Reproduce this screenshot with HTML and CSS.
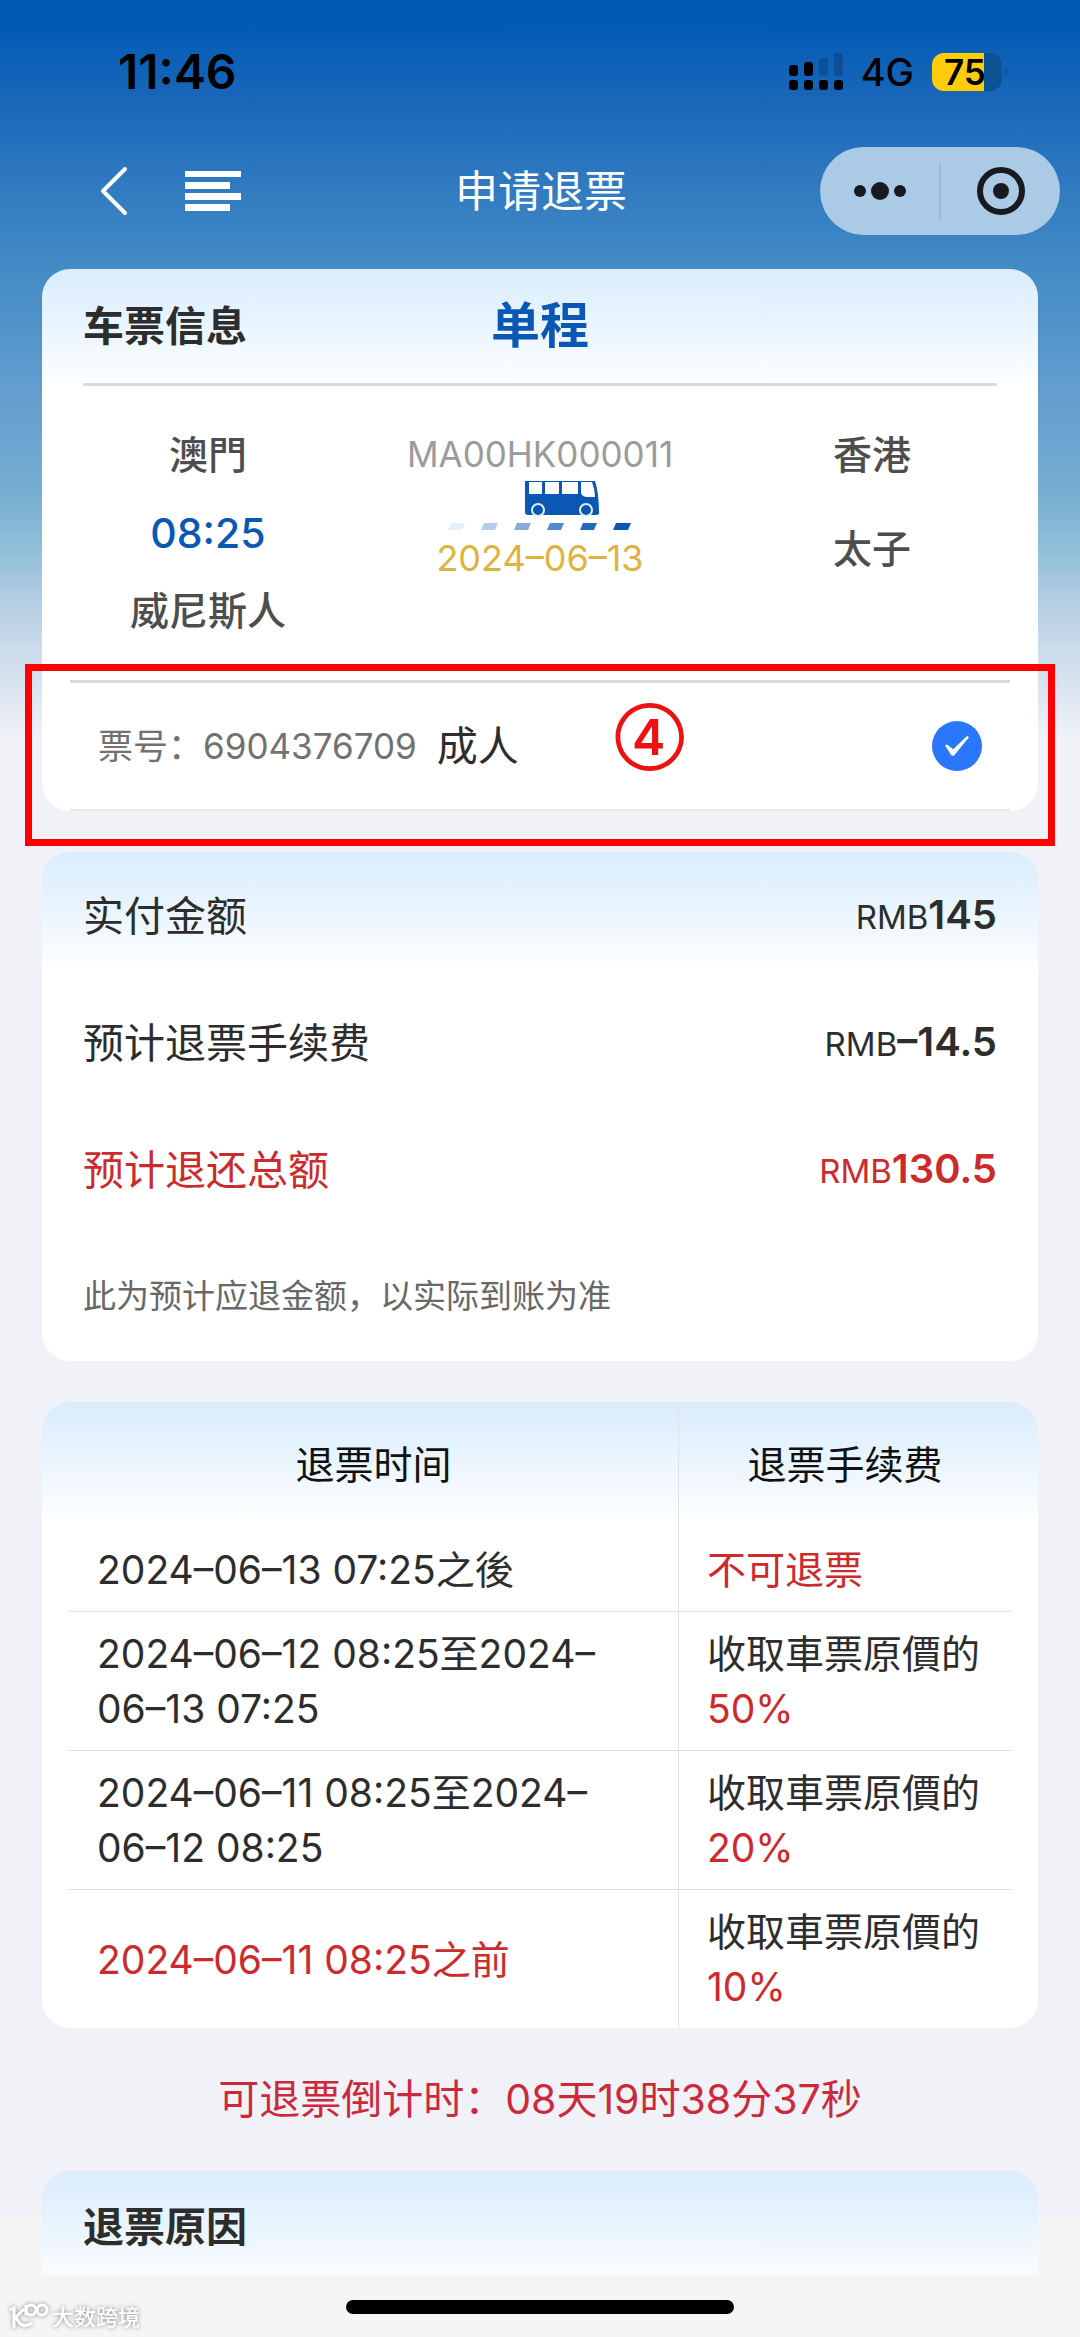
FILE: index.html
```html
<!DOCTYPE html>
<html lang="zh-CN">
<head>
<meta charset="utf-8">
<meta name="viewport" content="width=device-width, initial-scale=1">
<title>申请退票</title>
<link rel="stylesheet" href="styles.css">
</head>
<body>
<div class="page">
  <div class="status">
    <span class="status-time">11:46</span>
    <span class="status-right">
      <svg class="signal" width="54" height="38" viewBox="0 0 54 38" aria-hidden="true">
        <g class="signal-off"><rect x="30" y="5" width="9" height="18" rx="3"/><rect x="45" y="0" width="9" height="23" rx="3"/></g>
        <rect x="0" y="12" width="9" height="11" rx="3"/><rect x="15" y="9" width="9" height="14" rx="3"/>
        <rect x="0" y="27" width="9" height="10" rx="3"/><rect x="15" y="27" width="9" height="10" rx="3"/><rect x="30" y="27" width="9" height="10" rx="3"/><rect x="45" y="27" width="9" height="10" rx="3"/>
      </svg>
      <span class="network">4G</span>
      <span class="battery">75</span>
    </span>
  </div>

  <header class="nav">
    <div class="nav-left">
      <button class="icon-btn" aria-label="返回"><svg width="28" height="50" viewBox="0 0 28 50"><path d="M25 3L3 25L25 47" fill="none" stroke="#fff" stroke-width="4" stroke-linecap="round" stroke-linejoin="round"/></svg></button>
      <button class="icon-btn" aria-label="菜单"><svg width="56" height="40" viewBox="0 0 56 40" fill="#fff"><path d="M0 0h56v6H0zM0 11h45v7H0zM0 22h56v7H0zM0 33h45v7H0z"/></svg></button>
    </div>
    <h1 class="nav-title">申请退票</h1>
    <div class="capsule">
      <button class="capsule-btn" aria-label="更多"><svg width="54" height="20" viewBox="0 0 54 20" fill="#171b20"><circle cx="7" cy="10" r="6"/><circle cx="27" cy="10" r="9"/><circle cx="47" cy="10" r="6"/></svg></button>
      <button class="capsule-btn" aria-label="关闭"><svg width="48" height="48" viewBox="0 0 48 48"><circle cx="24" cy="24" r="21" fill="none" stroke="#171b20" stroke-width="6"/><circle cx="24" cy="24" r="8" fill="#171b20"/></svg></button>
    </div>
  </header>

  <main class="cards">
    <section class="card">
      <div class="card-head">
        <h2 class="card-title">车票信息</h2>
        <span class="trip-type">单程</span>
      </div>
      <div class="trip">
        <div class="stop">
          <span>澳門</span>
          <span class="depart">08:25</span>
          <span>威尼斯人</span>
        </div>
        <div class="line-info">
          <span class="line-no">MA00HK000011</span>
          <svg class="bus" width="184" height="50" viewBox="0 0 184 50" aria-hidden="true">
            <path d="M77 0H147Q151 12 151 33Q150 34 147 34H80Q77 34 77 31Z" fill="#0a58b4"/>
            <path d="M81 1H94V13H81ZM97 1H111V13H97ZM114 1H130V13H114ZM133 1H144Q147 9 147 16H138Q133 15 133 11Z" fill="#fff"/>
            <g fill="#0a58b4" stroke="#e6f0fa" stroke-width="2"><circle cx="90" cy="29" r="6"/><circle cx="138" cy="29" r="6"/></g>
            <g fill="#0a58b4"><path d="M3 42h14l-3 7H0z" opacity=".1"/><path d="M36 42h14l-3 7H33z" opacity=".3"/><path d="M69 42h14l-3 7H66z" opacity=".5"/><path d="M102 42h14l-3 7H99z" opacity=".7"/><path d="M135 42h14l-3 7h-14z" opacity=".9"/><path d="M168 42h15l-3 7h-15z"/></g>
          </svg>
          <span class="line-date">2024–06–13</span>
        </div>
        <div class="stop stop-end">
          <span>香港</span>
          <span>太子</span>
        </div>
      </div>
      <div class="ticket">
        <label class="ticket-label" for="ticket"><span class="ticket-no">票号：6904376709</span><span class="ticket-kind">成人</span></label>
        <input class="ticket-check" type="checkbox" id="ticket" checked>
        <span class="mark-box"></span>
        <span class="mark-num">④</span>
      </div>
    </section>

    <section class="card amounts">
      <div class="amount"><span>实付金额</span><span class="money">RMB<b>145</b></span></div>
      <div class="amount"><span>预计退票手续费</span><span class="money">RMB<b>–14.5</b></span></div>
      <div class="amount red"><span>预计退还总额</span><span class="money">RMB<b>130.5</b></span></div>
      <p class="note">此为预计应退金额，以实际到账为准</p>
    </section>

    <section class="card rules">
      <table class="rules-table">
        <thead><tr><th>退票时间</th><th>退票手续费</th></tr></thead>
        <tbody>
          <tr><td>2024–06–13 07:25之後</td><td class="red">不可退票</td></tr>
          <tr><td>2024–06–12 08:25至2024–06–13 07:25</td><td>收取車票原價的<span class="rate">50%</span></td></tr>
          <tr><td>2024–06–11 08:25至2024–06–12 08:25</td><td>收取車票原價的<span class="rate">20%</span></td></tr>
          <tr><td class="red">2024–06–11 08:25之前</td><td>收取車票原價的<span class="rate">10%</span></td></tr>
        </tbody>
      </table>
    </section>

    <p class="countdown">可退票倒计时：08天19时38分37秒</p>

    <section class="card reason">
      <h2 class="card-title">退票原因</h2>
    </section>
  </main>

  <footer class="foot">
    <span class="home-bar"></span>
    <span class="watermark">
      <svg width="40" height="28" viewBox="0 0 40 28" fill="none" stroke="#fff" stroke-width="3" aria-hidden="true"><path d="M1 7L5 5V25M15 6L7 14Q12 27 23 20M17 2V12"/><circle cx="22" cy="7" r="5"/><circle cx="33" cy="7" r="5"/></svg>
      大数跨境
    </span>
  </footer>
</div>
</body>
</html>
```
FILE: styles.css
```css
* { box-sizing: border-box; }

body {
  margin: 0;
  font-family: Inter, "Noto Sans CJK SC", sans-serif;
  font-size: 39px;
  line-height: 56px;
  color: #2d2d2d;
}

h1, h2, p { margin: 0; }

button {
  border: 0;
  padding: 0;
  background: none;
  cursor: pointer;
}

svg { display: block; }

.page {
  min-height: 100vh;
  display: flex;
  flex-direction: column;
  background: linear-gradient(180deg, #0059b5 0, #0059b5 15px, #1967b9 100px, #347dc1 200px, #438bc5 269px, #659fd0 400px, #75add0 490px, #91bfd9 550px, #b3cce3 600px, #cbdcea 650px, #e0e7f2 700px, #f1f2f8 740px, #f1f2f8 2213px, #f5f5f5 2217px);
}

/* status bar */
.status {
  display: flex;
  justify-content: space-between;
  align-items: center;
  height: 144px;
  padding: 0 78px 0 118px;
  color: #000;
}
.status-time { font-size: 48px; font-weight: 600; }
.status-right { display: flex; align-items: center; }
.signal-off { opacity: .18; }
.network { margin: 0 18px; font-size: 38px; font-weight: 500; }
.battery {
  position: relative;
  width: 70px;
  height: 38px;
  padding-left: 12px;
  border-radius: 12px;
  background: linear-gradient(90deg, #ffcc0a 75%, #0c5192 75%);
  font-size: 35px;
  font-weight: 600;
  line-height: 38px;
}
.battery::after {
  content: "";
  position: absolute;
  left: 72px;
  top: 13px;
  width: 4px;
  height: 12px;
  border-radius: 0 4px 4px 0;
  background: #0c5aa8;
}

/* navigation */
.nav {
  display: grid;
  grid-template-columns: 1fr auto 1fr;
  align-items: center;
  height: 94px;
  padding: 0 20px 0 100px;
}
.nav-left { display: flex; align-items: center; gap: 57px; }
.nav-title { padding-right: 78px; font-size: 43px; font-weight: 400; color: #fff; }
.capsule {
  justify-self: end;
  display: flex;
  align-items: center;
  width: 240px;
  height: 88px;
  border-radius: 44px;
  background: #abcae6;
}
.capsule-btn {
  flex: 1;
  display: flex;
  justify-content: center;
  align-items: center;
  height: 56px;
}
.capsule-btn + .capsule-btn { border-left: 2px solid #97b8d8; }

/* cards */
.cards { padding: 31px 42px 0; }
.card {
  border-radius: 28px;
  background: #fff linear-gradient(180deg, #dbecfd 0, #e7f4fe 50px, #fff 120px) no-repeat;
}
.card-title { font-size: 41px; font-weight: 700; }

.card-head {
  display: grid;
  grid-template-columns: 1fr auto 1fr;
  align-items: center;
  height: 117px;
  margin: 0 41px;
  border-bottom: 3px solid #dadada;
}
.trip-type { font-size: 49px; font-weight: 700; color: #0a58b4; }

.trip {
  display: grid;
  grid-template-columns: 1fr 1fr 1fr;
  height: 294px;
  padding-top: 41px;
  text-align: center;
  font-weight: 500;
  color: #4d4d4d;
}
.stop { display: flex; flex-direction: column; gap: 22px; }
.stop-end { gap: 38px; }
.depart { font-size: 41px; color: #0a58b4; }
.line-info {
  display: flex;
  flex-direction: column;
  align-items: center;
  font-size: 35px;
  line-height: 54px;
  font-weight: 400;
}
.line-no { color: #9b9b9b; }
.line-date { font-size: 36px; color: #deb340; }

.ticket {
  position: relative;
  display: flex;
  justify-content: space-between;
  align-items: center;
  height: 131px;
  margin: 0 28px;
  padding: 0 28px;
  border-top: 3px solid #dadada;
  border-bottom: 2px solid #e9e9e9;
}
.ticket-label { display: flex; align-items: center; gap: 20px; }
.ticket-no { font-size: 35px; color: #717171; }
.ticket-kind { font-size: 41px; }
.ticket-check {
  appearance: none;
  width: 50px;
  height: 50px;
  margin: 0;
  border-radius: 50%;
  background: #2a77fb;
  display: grid;
  place-items: center;
}
.ticket-check::before {
  content: "";
  width: 24px;
  height: 20px;
  background: #fff;
  clip-path: polygon(0 46%, 8% 42%, 34% 66%, 92% 0, 100% 6%, 36% 100%, 26% 96%);
}

/* annotation laid over the ticket row */
.mark-box {
  position: absolute;
  inset: -19px -45px -37px;
  border: 7px solid #f00;
  pointer-events: none;
}
.mark-num {
  position: absolute;
  left: 545px;
  top: 20px;
  font-size: 50px;
  line-height: 68px;
  font-weight: 600;
  color: #ee1111;
}

.amounts { margin-top: 41px; padding-bottom: 1px; }
.amount {
  display: flex;
  justify-content: space-between;
  align-items: center;
  height: 127px;
  padding: 0 41px;
  font-size: 41px;
}
.money { font-size: 33px; }
.money b { font-size: 40px; font-weight: 600; }
.note {
  padding: 0 41px;
  font-size: 33px;
  line-height: 127px;
  color: #686868;
}
.red, .rate { color: #cc2a2c; }

.rules { margin-top: 41px; padding: 0 27px; }
.rules-table { width: 100%; border-collapse: collapse; table-layout: fixed; }
.rules-table th {
  height: 126px;
  padding: 0;
  font-weight: 400;
  color: #111;
}
.rules-table th:first-child, .rules-table td:first-child {
  width: 64.7%;
  border-right: 1px solid #dfe2e5;
}
.rules-table td { padding: 14px 28px; line-height: 55px; }
.rules-table td + td { padding-right: 0; }
.rules-table tr + tr td { border-top: 1px solid #dedede; }
.rate { display: block; }

.countdown {
  padding: 43px 0 44px;
  text-align: center;
  font-size: 41px;
  color: #cc2a3c;
}

.reason {
  height: 104px;
  padding: 28px 41px;
  border-radius: 28px 28px 0 0;
}

/* bottom area */
.foot {
  position: relative;
  display: flex;
  justify-content: center;
  padding: 25px 0 22px;
}
.home-bar {
  width: 36%;
  height: 14px;
  border-radius: 7px;
  background: #000;
}
.watermark {
  position: absolute;
  left: 9px;
  bottom: 4px;
  display: flex;
  align-items: center;
  gap: 3px;
  font-size: 22px;
  line-height: 30px;
  font-weight: 500;
  color: #fff;
  filter: drop-shadow(0 0 2px #888);
}
```
